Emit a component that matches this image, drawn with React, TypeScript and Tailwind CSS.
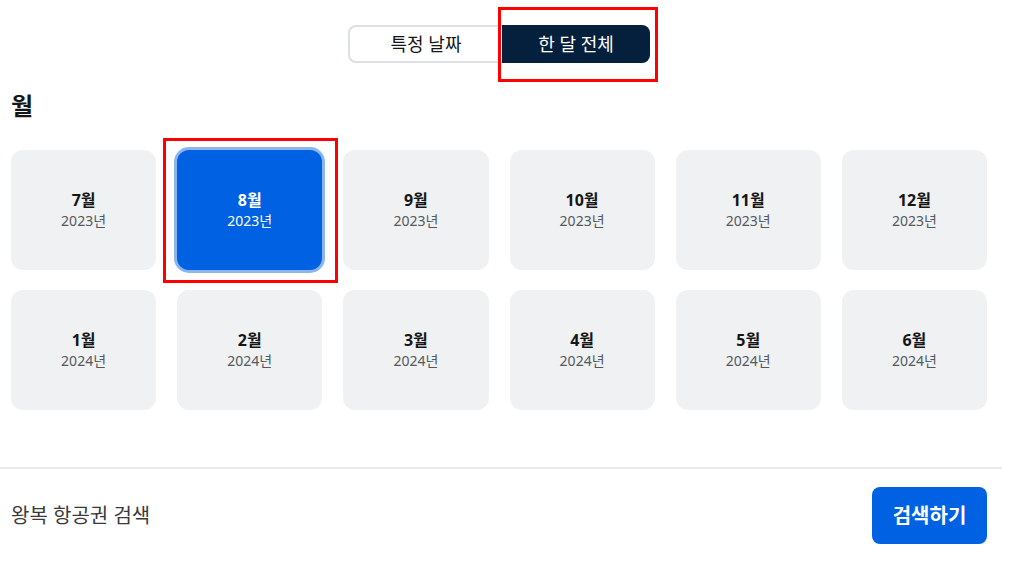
import React from "react";

const months = [
  { m: "7월", y: "2023년" },
  { m: "8월", y: "2023년", sel: true },
  { m: "9월", y: "2023년" },
  { m: "10월", y: "2023년" },
  { m: "11월", y: "2023년" },
  { m: "12월", y: "2023년" },
  { m: "1월", y: "2024년" },
  { m: "2월", y: "2024년" },
  { m: "3월", y: "2024년" },
  { m: "4월", y: "2024년" },
  { m: "5월", y: "2024년" },
  { m: "6월", y: "2024년" },
];

export default function App() {
  return (
    <div
      className="relative w-[1018px] h-[561px] bg-white overflow-hidden"
      style={{ fontFamily: '"Noto Sans", "Noto Sans CJK KR", sans-serif' }}
    >
      <div className="pl-[11px] w-[987px]">
        <div className="flex justify-center pt-[25px]">
          <div className="flex">
            <button className="w-[154px] h-[38px] border-2 border-[#dde0e4] rounded-l-[8px] border-r-0 bg-white text-[#161616] text-[18px]">
              특정 날짜
            </button>
            <button className="relative w-[148px] h-[38px] rounded-r-[8px] bg-[#05203c] text-white text-[18px]">
              한 달 전체
              <span className="absolute left-[-4px] top-[-18px] w-[160px] h-[75px] border-[3px] border-[#ff0000] pointer-events-none" />
            </button>
          </div>
        </div>
        <h2 className="mt-[30px] text-[24px] font-bold text-[#161616] leading-[26px]">월</h2>
        <div className="mt-[31px] grid grid-cols-6 gap-x-[21px] gap-y-[20px]">
          {months.map((c) =>
            c.sel ? (
              <div key={c.m} className="relative h-[120px]">
                <div className="h-full rounded-[12px] bg-[#0062e3] ring-[3px] ring-[#8cb5ee] flex flex-col items-center justify-center">
                  <div className="text-[16px] font-bold text-white leading-[22px]">{c.m}</div>
                  <div className="text-[14px] text-white leading-[20px]">{c.y}</div>
                </div>
                <span className="absolute left-[-14px] top-[-12px] w-[175px] h-[145px] border-[3px] border-[#ff0000] pointer-events-none" />
              </div>
            ) : (
              <div
                key={c.m}
                className="h-[120px] rounded-[12px] bg-[#eff1f2] flex flex-col items-center justify-center"
              >
                <div className="text-[16px] font-bold text-[#161616] leading-[22px]">{c.m}</div>
                <div className="text-[14px] text-[#545860] leading-[20px]">{c.y}</div>
              </div>
            )
          )}
        </div>
      </div>
      <div className="mt-[57px] w-[1002px] h-[2px] bg-[#e8eaed]" />
      <div className="flex items-center justify-between pl-[11px] w-[987px] mt-[18px]">
        <span className="text-[20px] text-[#3a3a3a]">왕복 항공권 검색</span>
        <button className="w-[115px] h-[57px] rounded-[8px] bg-[#0062e3] text-white text-[20px] font-bold">
          검색하기
        </button>
      </div>
    </div>
  );
}
